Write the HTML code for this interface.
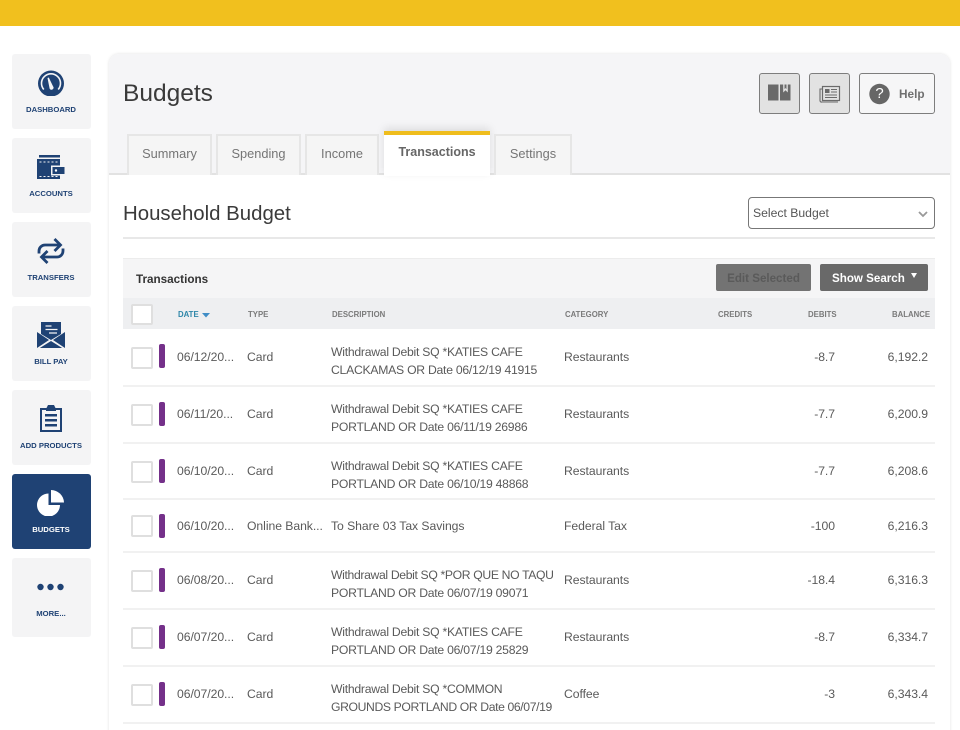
<!DOCTYPE html>
<html><head><meta charset="utf-8"><style>
*{box-sizing:border-box}
html,body{margin:0;padding:0;width:960px;height:730px;overflow:hidden;background:#fff}
#w{position:relative;width:960px;height:730px;overflow:hidden;background:#fff;font-family:"Liberation Sans",sans-serif;color:#555}
.a{position:absolute;white-space:nowrap}
#top{left:0;top:0;width:960px;height:26px;background:#f1c01e}
.nav{position:absolute;left:11.500px;width:79px;height:75px;background:#f4f4f5;border-radius:3px;text-align:center;color:#1f4274;font-weight:bold;font-size:7.700px}
.nav span{position:absolute;left:0;right:0;top:51px}
.nav svg{position:absolute;left:19.500px;top:10px}
.nav.on{background:#1f4274;color:#fff}
#panel{left:109px;top:54px;width:841px;height:690px;background:#fff;border-radius:10px;box-shadow:0 0 3px rgba(0,0,0,.12)}
#head{left:109px;top:54px;width:841px;height:121px;background:#f5f5f7;border-radius:10px 10px 0 0;border-bottom:2px solid #e2e2e2}
.ib{position:absolute;top:73px;height:41px;border:1px solid #7d7d7d;border-radius:3px;background:#e2e2e2}
.tab{position:absolute;top:134px;height:41px;background:#f5f5f5;border:2px solid #e6e6e6;border-bottom:0;text-align:center;font-size:12.800px;line-height:36px;color:#757575}
.hd{position:absolute;top:310px;font-size:7.800px;font-weight:bold;color:#7a7a7a;white-space:nowrap}
.row{position:absolute;left:123px;width:812px;border-bottom:2px solid #f1f1f1}
.t{position:absolute;font-size:12.200px;color:#5a5a5a;white-space:nowrap;letter-spacing:-.05px}
.cb{position:absolute;left:8px;width:22px;height:22px;background:#fff;border:2px solid #dfdfdf;border-radius:2px}
.bar{position:absolute;left:36px;width:6px;height:24px;background:#743089;border-radius:2px}
.d{line-height:17.500px;font-size:12.200px;letter-spacing:-.25px}
.r{text-align:right}
</style></head><body><div id="w">
<div class="a" id="top"></div>

<div class="nav" style="top:54px"><svg width="40" height="32" viewBox="0 0 40 32"><circle cx="20" cy="19.500" r="13" fill="#1f4274"/><path d="M12.800 25.500a9.500 9.500 0 1 1 14.400 0" fill="none" stroke="#f4f4f5" stroke-width="1.600"/><path d="M16.500 14l1.300-.5 4.200 8.700a2.100 2.100 0 1 1-3.600 1.300z" fill="#f4f4f5"/></svg><span>DASHBOARD</span></div>
<div class="nav" style="top:138px"><svg width="40" height="32" viewBox="0 0 40 32"><path d="M8 7h21v2.500H8z" fill="#1f4274"/><path d="M6 11h23v20H6z" fill="#1f4274"/><path d="M8.500 14h18M8.500 28.500h18" stroke="#f4f4f5" stroke-width="1" stroke-dasharray="2 2"/><rect x="20" y="17.500" width="14" height="10" fill="#f4f4f5"/><rect x="21.500" y="19" width="12" height="7" fill="#1f4274"/><circle cx="25" cy="22.500" r="1.200" fill="#fff"/></svg><span>ACCOUNTS</span></div>
<div class="nav" style="top:222px"><svg width="40" height="32" viewBox="0 0 40 32"><g fill="none" stroke="#1f4274" stroke-width="2.800"><path d="M8 21.500V19a6 6 0 0 1 6-6h14"/><path d="M23.500 7l6 6-6 6"/><path d="M32 16.500V19a6 6 0 0 1-6 6H12"/><path d="M16.500 19l-6 6 6 6"/></g></svg><span>TRANSFERS</span></div>
<div class="nav" style="top:306px"><svg width="40" height="32" viewBox="0 0 40 32"><path d="M10 6h20v12l-10 6-10-6z" fill="#1f4274"/><path d="M14.500 10h6M14.500 13.500h12M18 17h8" stroke="#f4f4f5" stroke-width="1.200"/><path d="M6 16l12 8-12 8zM34 16l-12 8 12 8zM8 32.500l12-7.500 12 7.500z" fill="#1f4274"/></svg><span>BILL PAY</span></div>
<div class="nav" style="top:390px"><svg width="40" height="32" viewBox="0 0 40 32"><path d="M9 8h6.500l1.500-3h6l1.500 3H31v24H9z" fill="#1f4274"/><path d="M11 10h18v20H11z" fill="#f4f4f5"/><path d="M15 8h10v3H15z" fill="#1f4274"/><path d="M14 14h12v2.500H14zM14 19h12v2.500H14zM14 24h12v2.500H14z" fill="#1f4274"/></svg><span>ADD PRODUCTS</span></div>
<div class="nav on" style="top:474px"><svg width="40" height="32" viewBox="0 0 40 32"><path d="M17.500 9.500V21H29A11.500 11.500 0 1 1 17.500 9.500z" fill="#fff"/><path d="M20 6a13 13 0 0 1 13 12.500H20z" fill="#fff"/></svg><span>BUDGETS</span></div>
<div class="nav" style="top:558px;height:79px"><svg width="40" height="32" viewBox="0 0 40 32"><circle cx="9.500" cy="19" r="3.200" fill="#1f4274"/><circle cx="19.500" cy="19" r="3.200" fill="#1f4274"/><circle cx="29.500" cy="19" r="3.200" fill="#1f4274"/></svg><span style="color:#1f4274">MORE...</span></div>

<div class="a" id="panel"></div>
<div class="a" id="head"></div>
<div class="a" style="left:123px;top:80px;font-size:24.500px;color:#3a3a3a">Budgets</div>

<div class="ib" style="left:759px;width:41px"><svg width="39" height="39" viewBox="0 0 39 39"><path d="M8 10.500h10.500v16H8zM20 10.500h10.500v16H20z" fill="#6a6a6a"/><path d="M23.200 10h4.600v8.500l-2.300-2.200-2.300 2.200z" fill="#e2e2e2"/><path d="M24.500 10.500h2v4.500l-1-.9-1 .9z" fill="#6a6a6a"/></svg></div>
<div class="ib" style="left:809px;width:41px"><svg width="39" height="39" viewBox="0 0 39 39"><g fill="none" stroke="#6a6a6a"><rect x="12.500" y="12.500" width="17" height="14" stroke-width="1.200"/><path d="M12.500 15H10v11.500a1.500 1.500 0 0 0 2 1.500h16" stroke-width="1.100"/><path d="M21 15.500h6M21 18h6M15 21h12M15 23.500h12" stroke-width="1"/></g><rect x="15" y="15" width="4.500" height="4" fill="#6a6a6a"/></svg></div>
<div class="ib" style="left:859px;width:76px;background:#f6f6f7"><svg width="30" height="39" viewBox="0 0 30 39" style="position:absolute;left:0;top:0"><circle cx="19.500" cy="20" r="10.200" fill="#666"/></svg><div class="a" style="left:14px;top:11px;width:11px;text-align:center;color:#fff;font-size:15px">?</div><div class="a" style="left:39px;top:13px;font-size:11.800px;font-weight:bold;color:#707070">Help</div></div>

<div class="tab" style="left:127px;width:85px">Summary</div>
<div class="tab" style="left:216px;width:85px">Spending</div>
<div class="tab" style="left:305px;width:74px">Income</div>
<div class="tab" style="left:384px;top:131px;width:106px;height:45px;background:#fff;border:0;border-top:4px solid #efbd1d;line-height:35px;font-weight:bold;color:#666;font-size:12.500px;box-shadow:0 -3px 8px rgba(0,0,0,.1)">Transactions</div>
<div class="tab" style="left:494px;width:78px">Settings</div>

<div class="a" style="left:123px;top:203px;font-size:20.400px;color:#3a3a3a">Household Budget</div>
<div class="a" style="left:123px;top:237px;width:812px;height:2px;background:#e8e8e8"></div>
<div class="a" style="left:748px;top:197px;width:187px;height:32px;border:1px solid #777;border-radius:4px;background:#fff;font-size:12.200px;line-height:30px;padding-left:4px;color:#555">Select Budget<svg width="10" height="7" viewBox="0 0 10 7" style="position:absolute;left:169px;top:13px"><path d="M1 1l4 4 4-4" fill="none" stroke="#999" stroke-width="1.800"/></svg></div>

<div class="a" style="left:123px;top:258px;width:812px;height:40px;background:#f5f5f6;border-top:1px solid #ececec"></div>
<div class="a" style="left:136px;top:273px;font-size:11.700px;font-weight:bold;color:#333">Transactions</div>
<div class="a" style="left:716px;top:264px;width:95px;height:27px;background:#737373;border-radius:2px;text-align:center;line-height:30px;font-size:11.600px;font-weight:bold;color:#5a5a5a">Edit Selected</div>
<div class="a" style="left:820px;top:264px;width:108px;height:27px;background:#696969;border-radius:2px;line-height:30px;font-size:11.600px;font-weight:bold;color:#fff;padding-left:12px">Show Search<svg width="6" height="5" viewBox="0 0 6 5" style="position:absolute;left:91px;top:9px"><path d="M0 0h6L3 5z" fill="#fff"/></svg></div>

<div class="a" style="left:123px;top:298px;width:812px;height:31px;background:#eeeff1"></div>
<div class="cb" style="left:131px;top:304px;width:22px;height:21px"></div>
<div class="hd" style="left:178px;color:#2d86a8">DATE</div>
<svg class="a" width="8" height="5" viewBox="0 0 8 5" style="left:202px;top:313px"><path d="M0 0h8L4 4.500z" fill="#3f8dc6"/></svg>
<div class="hd" style="left:248px">TYPE</div>
<div class="hd" style="left:332px">DESCRIPTION</div>
<div class="hd" style="left:565px">CATEGORY</div>
<div class="hd" style="left:718px">CREDITS</div>
<div class="hd" style="left:808px">DEBITS</div>
<div class="hd" style="left:892px">BALANCE</div>

<div class="row" style="top:329px;height:58px"><div class="cb" style="top:18px"></div><div class="bar" style="top:15px"></div><div class="t" style="left:54px;top:21px">06/12/20...</div><div class="t" style="left:124px;top:21px">Card</div><div class="t d" style="left:208px;top:15px">Withdrawal Debit SQ *KATIES CAFE<br>CLACKAMAS OR Date 06/12/19 41915</div><div class="t" style="left:441px;top:21px">Restaurants</div><div class="t r" style="right:100px;top:21px">-8.7</div><div class="t r" style="right:7px;top:21px">6,192.2</div></div>
<div class="row" style="top:387px;height:57px"><div class="cb" style="top:17px"></div><div class="bar" style="top:15px"></div><div class="t" style="left:54px;top:20px">06/11/20...</div><div class="t" style="left:124px;top:20px">Card</div><div class="t d" style="left:208px;top:14px">Withdrawal Debit SQ *KATIES CAFE<br>PORTLAND OR Date 06/11/19 26986</div><div class="t" style="left:441px;top:20px">Restaurants</div><div class="t r" style="right:100px;top:20px">-7.7</div><div class="t r" style="right:7px;top:20px">6,200.9</div></div>
<div class="row" style="top:444px;height:56px"><div class="cb" style="top:17px"></div><div class="bar" style="top:15px"></div><div class="t" style="left:54px;top:20px">06/10/20...</div><div class="t" style="left:124px;top:20px">Card</div><div class="t d" style="left:208px;top:14px">Withdrawal Debit SQ *KATIES CAFE<br>PORTLAND OR Date 06/10/19 48868</div><div class="t" style="left:441px;top:20px">Restaurants</div><div class="t r" style="right:100px;top:20px">-7.7</div><div class="t r" style="right:7px;top:20px">6,208.6</div></div>
<div class="row" style="top:500px;height:53px"><div class="cb" style="top:15px"></div><div class="bar" style="top:14px"></div><div class="t" style="left:54px;top:19px">06/10/20...</div><div class="t" style="left:124px;top:19px">Online Bank...</div><div class="t" style="left:208px;top:19px">To Share 03 Tax Savings</div><div class="t" style="left:441px;top:19px">Federal Tax</div><div class="t r" style="right:100px;top:19px">-100</div><div class="t r" style="right:7px;top:19px">6,216.3</div></div>
<div class="row" style="top:553px;height:57px"><div class="cb" style="top:17px"></div><div class="bar" style="top:15px"></div><div class="t" style="left:54px;top:20px">06/08/20...</div><div class="t" style="left:124px;top:20px">Card</div><div class="t d" style="left:208px;top:14px;letter-spacing:-.35px">Withdrawal Debit SQ *POR QUE NO TAQU<br><span style="letter-spacing:-.25px">PORTLAND OR Date 06/07/19 09071</span></div><div class="t" style="left:441px;top:20px">Restaurants</div><div class="t r" style="right:100px;top:20px">-18.4</div><div class="t r" style="right:7px;top:20px">6,316.3</div></div>
<div class="row" style="top:610px;height:57px"><div class="cb" style="top:17px"></div><div class="bar" style="top:15px"></div><div class="t" style="left:54px;top:20px">06/07/20...</div><div class="t" style="left:124px;top:20px">Card</div><div class="t d" style="left:208px;top:14px">Withdrawal Debit SQ *KATIES CAFE<br>PORTLAND OR Date 06/07/19 25829</div><div class="t" style="left:441px;top:20px">Restaurants</div><div class="t r" style="right:100px;top:20px">-8.7</div><div class="t r" style="right:7px;top:20px">6,334.7</div></div>
<div class="row" style="top:667px;height:57px"><div class="cb" style="top:17px"></div><div class="bar" style="top:15px"></div><div class="t" style="left:54px;top:20px">06/07/20...</div><div class="t" style="left:124px;top:20px">Card</div><div class="t d" style="left:208px;top:14px">Withdrawal Debit SQ *COMMON<br><span style="letter-spacing:-.38px">GROUNDS PORTLAND OR Date 06/07/19</span></div><div class="t" style="left:441px;top:20px">Coffee</div><div class="t r" style="right:100px;top:20px">-3</div><div class="t r" style="right:7px;top:20px">6,343.4</div></div>
</div></body></html>
